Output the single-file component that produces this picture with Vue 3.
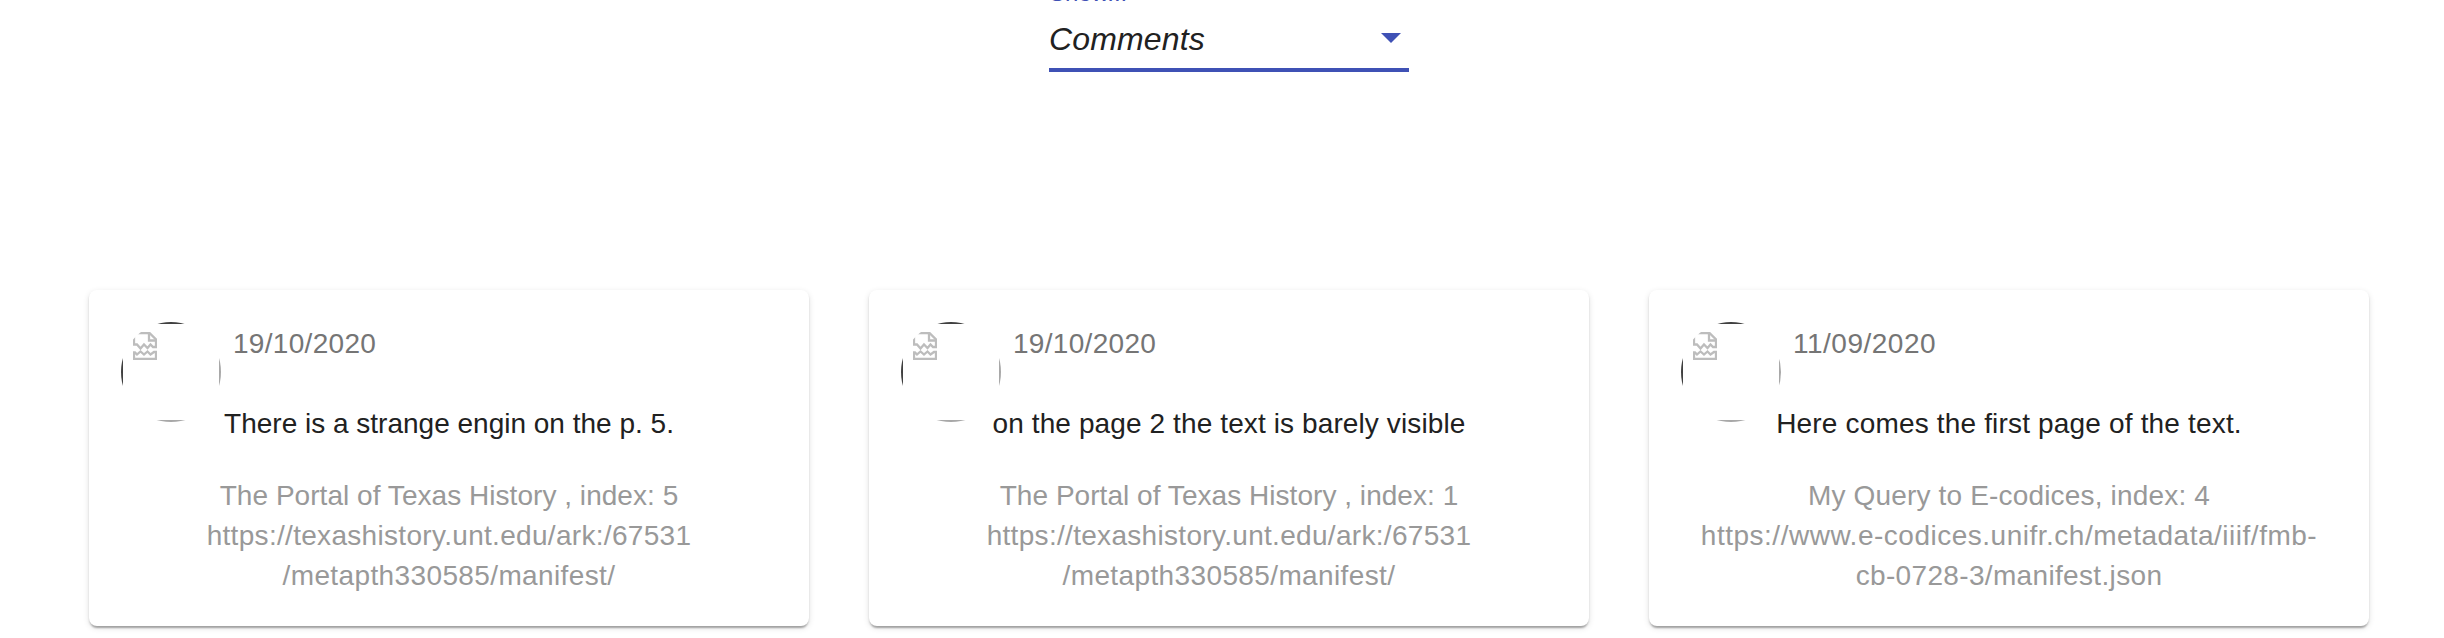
<script setup>
const texas = [
  { t: 'https://texashistory.unt.edu/ark:/67531', s: 0.31 },
  { t: '/metapth330585/manifest/', s: 0.38 },
]
const cards = [
  { date: '19/10/2020', ds: 0.3, text: 'There is a strange engin on the p. 5.', ts: 0, lines: [{ t: 'The Portal of Texas History , index: 5', s: 0.04 }, ...texas] },
  { date: '19/10/2020', ds: 0.3, text: 'on the page 2 the text is barely visible', ts: 0.11, lines: [{ t: 'The Portal of Texas History , index: 1', s: 0.04 }, ...texas] },
  {
    date: '11/09/2020', ds: 0.5, text: 'Here comes the first page of the text.', ts: 0.17,
    lines: [
      { t: 'My Query to E-codices, index: 4', s: 0.17 },
      { t: 'https://www.e-codices.unifr.ch/metadata/iiif/fmb-', s: 0.51 },
      { t: 'cb-0728-3/manifest.json', s: 0.34 },
    ],
  },
]
const track = (s) => ({ letterSpacing: s + 'px' })
</script>

<template>
  <main class="page">
    <div class="field">
      <span class="label">Show...</span>
      <div class="select">
        <span class="value">Comments</span>
        <span class="arrow"></span>
      </div>
    </div>
    <section class="cards">
      <article v-for="(card, i) in cards" :key="i" class="card">
        <header class="head">
          <div class="avatar">
            <svg class="broken" width="24" height="28" viewBox="0 0 24 28" fill="none" stroke="#bdbdbd" stroke-width="2.3">
              <path d="M1 1H16.5L23 7.5V15H20L17.5 12.5L14.5 16L11 12.5L7.5 16.5L4 12.5H1Z" />
              <path d="M16 1V8.5H23" />
              <path d="M1 27V20.5H2L4 22.5L7.5 19.5L11 22.5L14.5 19.5L17.5 22.5L21 20H23V27Z" />
            </svg>
          </div>
          <span class="date" :style="track(card.ds)">{{ card.date }}</span>
        </header>
        <p class="text" :style="track(card.ts)">{{ card.text }}</p>
        <div class="source">
          <div v-for="line in card.lines" :key="line.t" :style="track(line.s)">{{ line.t }}</div>
        </div>
      </article>
    </section>
  </main>
</template>

<style>
body { margin: 0; background: #fff; }
</style>

<style scoped>
.page {
  width: 2444px;
  height: 638px;
  overflow: hidden;
  display: flex;
  flex-direction: column;
  font-family: "Liberation Sans", Arial, sans-serif;
  font-size: 28px;
  line-height: 40px;
  color: #212121;
}
.field {
  width: 360px;
  height: 72px;
  margin-left: 1049px;
  box-sizing: border-box;
  border-bottom: 4px solid #3f51b5;
}
.label {
  display: block;
  height: 27px;
  margin-top: -21px;
  font-size: 24px;
  line-height: 27px;
  letter-spacing: -0.1px;
  color: #3f51b5;
}
.select {
  display: flex;
  align-items: center;
  justify-content: space-between;
  height: 36px;
  margin-top: 15px;
  padding-right: 8px;
}
.value { font-size: 32px; font-style: italic; line-height: 36px; letter-spacing: 0.15px; }
.arrow {
  margin-bottom: 2px;
  border-left: 10px solid transparent;
  border-right: 10px solid transparent;
  border-top: 10px solid #3f51b5;
}
.cards {
  display: grid;
  grid-template-columns: repeat(3, 720px);
  gap: 60px;
  margin: 218px 0 0 89px;
}
.card {
  height: 336px;
  box-sizing: border-box;
  padding: 32px;
  border-radius: 8px;
  background: #fff;
  box-shadow: 0 4px 2px -2px rgba(0, 0, 0, .2), 0 2px 2px rgba(0, 0, 0, .14), 0 2px 6px rgba(0, 0, 0, .12);
}
.head { display: flex; height: 82px; }
.avatar {
  flex: none;
  width: 100px;
  height: 100px;
  box-sizing: border-box;
  padding: 8px 10px;
  border: 2px solid;
  border-color: #404040 #a8a8a8 #a8a8a8 #404040;
  clip-path: circle(50%);
}
.broken { display: block; }
.date { margin: 2px 0 0 12px; color: #757575; }
.text { margin: 0; text-align: center; white-space: nowrap; }
.source { margin-top: 32px; text-align: center; white-space: nowrap; color: #999; }
</style>
